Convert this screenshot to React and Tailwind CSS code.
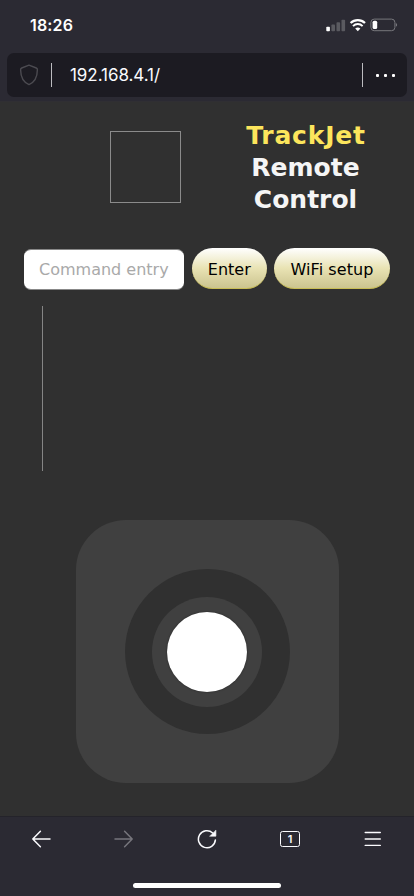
import React from "react";

function StatusBar() {
  return (
    <div className="flex h-[53px] items-start justify-between pl-[30px] pr-[16px] pt-[16px]">
      <span className="font-['Inter',sans-serif] text-[16px] font-semibold leading-[18px] tracking-[0.15px]">18:26</span>
      <svg width="72" height="14" viewBox="326 18 72 14" className="mt-[1.5px]" fill="none">
        <rect x="326.3" y="26.8" width="3.6" height="4.4" rx="0.8" fill="#fff" />
        <rect x="331.4" y="24.6" width="3.6" height="6.6" rx="0.8" fill="#5a5a60" />
        <rect x="336.5" y="22.3" width="3.6" height="8.9" rx="0.8" fill="#5a5a60" />
        <rect x="341.5" y="19.8" width="3.6" height="11.4" rx="0.8" fill="#5a5a60" />
        <path d="M350.6 23A10.3 10.3 0 0 1 365 23" stroke="#fff" strokeWidth="2.2" />
        <path d="M353 26.1A6.8 6.8 0 0 1 362.6 26.1" stroke="#fff" strokeWidth="2" />
        <path d="M355.2 28.6A3.8 3.8 0 0 1 360.4 28.6L357.8 31.3Z" fill="#fff" />
        <rect x="370.9" y="19.1" width="24" height="11.6" rx="3.3" stroke="#77777c" />
        <rect x="372.6" y="20.7" width="4.6" height="8.4" rx="1.6" fill="#fff" />
        <path d="M395.8 23C397.6 23.8 397.6 26.2 395.8 26.8Z" fill="#77777c" />
      </svg>
    </div>
  );
}

function AddressBar() {
  return (
    <div className="mx-[7px] flex h-[44px] items-center rounded-[7px] bg-[#1c1b22]">
      <svg width="20" height="22" viewBox="0 0 20 22" className="ml-[12px]" fill="none" stroke="#4c4b51" strokeWidth="1.4" strokeLinejoin="round">
        <path d="M10 1.2L17.3 4Q18.5 4.5 18.4 5.8C18.3 13 16 18.2 10 20.6C4 18.2 1.7 13 1.6 5.8Q1.5 4.5 2.7 4Z" />
      </svg>
      <div className="ml-[12px] h-[24px] w-px bg-[#bcbcc0]" />
      <span className="ml-[18px] flex-1 font-['Inter',sans-serif] text-[17px] leading-[24px] tracking-[-0.05px] text-[#fbfbfe]">192.168.4.1/</span>
      <div className="h-[24px] w-px bg-[#bcbcc0]" />
      <div className="ml-[13px] mr-[12px] flex gap-[5px]">
        <i className="size-[3px] rounded-[1px] bg-white" />
        <i className="size-[3px] rounded-[1px] bg-white" />
        <i className="size-[3px] rounded-[1px] bg-white" />
      </div>
    </div>
  );
}

function Joystick() {
  return (
    <div className="mx-auto mt-[49px] flex size-[263px] items-center justify-center rounded-[50px] bg-[#404040]">
      <div className="flex size-[165px] items-center justify-center rounded-full bg-[#303030]">
        <div className="flex size-[110px] items-center justify-center rounded-full bg-[#404040]">
          <div className="size-[80px] rounded-full bg-white shadow-[0_0_2px_#222]" />
        </div>
      </div>
    </div>
  );
}

const buttonClass =
  "h-[41px] whitespace-nowrap rounded-full border-b border-[#c8bd55] bg-linear-to-b from-white via-[#e9e3b4] to-[#cbc48f] pt-[4px] text-[16px] text-black";

function RemotePage() {
  return (
    <main className="h-[714px] bg-[#303030] font-['Verdana','DejaVu_Sans',sans-serif]">
      <div className="flex h-[146px] pt-[17px]">
        <div className="ml-[110px] mt-[12px] h-[72px] w-[71px] border border-[#8b8b8b]" />
        <h1 className="ml-[45px] mt-px w-[160px] text-center text-[25px] font-bold leading-[32px] text-[#f5f5f5]">
          <span className="tracking-[0.8px] text-[#fce55c]">TrackJet</span>
          <br />
          <span className="mr-px">Remote</span>
          <br />
          <span className="mr-px">Control</span>
        </h1>
      </div>
      <div className="flex h-[58px] items-start pl-[24px]">
        <input
          className="mt-px h-[41px] w-[160px] rounded-[7px] border-y border-[#888] bg-white px-[15px] text-[16px] outline-none placeholder:text-[#a9a9a9]"
          placeholder="Command entry"
        />
        <button className={buttonClass + " ml-[7.5px] w-[75.5px]"}>Enter</button>
        <button className={buttonClass + " ml-[7px] w-[116px] tracking-[0.1px]"}>WiFi setup</button>
      </div>
      <div className="ml-[42px] h-[165px] w-px bg-[#858585]" />
      <Joystick />
    </main>
  );
}

function BottomBar() {
  return (
    <nav className="flex h-[80px] flex-col items-center justify-between border-t border-[#24232a] pb-[8px] pt-[11px]">
      <div className="flex h-[22px] w-full items-center pl-[31px]">
        <svg width="20" height="20" viewBox="0 0 20 20" fill="none" stroke="#fbfbfe" strokeWidth="1.5" strokeLinecap="round" strokeLinejoin="round">
          <path d="M19 10H1.8M9.4 2.3L1.8 10L9.4 17.7" />
        </svg>
        <svg width="20" height="20" viewBox="0 0 20 20" className="ml-[63px]" fill="none" stroke="#77767d" strokeWidth="1.5" strokeLinecap="round" strokeLinejoin="round">
          <path d="M1 10H18.2M10.6 2.3L18.2 10L10.6 17.7" />
        </svg>
        <svg width="20" height="20" viewBox="0 0 20 20" className="ml-[63px]" fill="none" stroke="#fbfbfe" strokeWidth="1.5" strokeLinecap="round">
          <path d="M18.4 10.9A8.5 8.5 0 1 1 15.7 4" />
          <path d="M18.9 1.5V7.2H13Z" fill="#fbfbfe" strokeWidth="0.6" strokeLinejoin="round" />
        </svg>
        <div className="ml-[63px] flex h-[16px] w-[20px] items-center justify-center rounded-[2.5px] border-[1.5px] border-[#fbfbfe] font-['Inter',sans-serif] text-[11px] font-semibold leading-none text-[#fbfbfe]">
          1
        </div>
        <svg width="18" height="16" viewBox="0 0 18 16" className="ml-[64px]" stroke="#fbfbfe" strokeWidth="1.4" strokeLinecap="round">
          <path d="M1.2 1.5H16.3M1.2 8H16.3M1.2 14.4H16.3" />
        </svg>
      </div>
      <div className="h-[5px] w-[148px] rounded-full bg-white" />
    </nav>
  );
}

export default function App() {
  return (
    <div className="h-[896px] w-[414px] overflow-hidden bg-[#2b2a33] text-white">
      <header className="h-[102px] border-b border-[#302f33]">
        <StatusBar />
        <AddressBar />
      </header>
      <RemotePage />
      <BottomBar />
    </div>
  );
}
